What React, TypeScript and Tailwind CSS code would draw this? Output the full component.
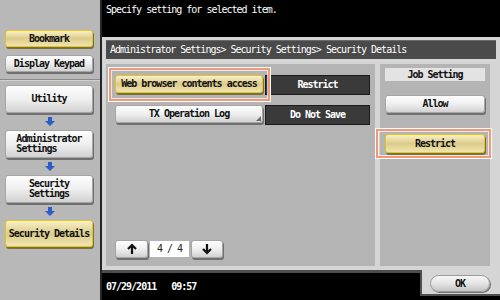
import React from 'react';

const mono = "font-['DejaVu_Sans_Mono',monospace] tracking-[-1px] text-[10px] leading-[10px]";
const grayBtn =
  'bg-linear-to-b from-[#fdfdfd] via-[#efefef] to-[#d2d2d2] border border-[#a5a5a5] shadow-[1px_2px_0_#6f6f6f] rounded-[3px] text-[#111]';
const yellowBtn =
  'bg-linear-to-b from-[#f8f0c6] via-[#dccb8a] to-[#f1e5ad] border border-[#e3c51b] shadow-[1px_2px_0_#7a7040] rounded-[3px] text-[#111]';

const BlueArrow = () => (
  <svg width="10" height="9" viewBox="0 0 10 9">
    <path d="M3 0h4v4h3L5 9 0 4h3z" fill="#2c5cc5" />
  </svg>
);

const Highlight = ({ pos }: { pos: string }) => (
  <div className={`pointer-events-none absolute border border-white ${pos}`}>
    <div className="h-full border-2 border-[#f19877]">
      <div className="h-full border border-white/70" />
    </div>
  </div>
);

const SideBtn = ({
  children,
  yellow,
  h,
}: {
  children: React.ReactNode;
  yellow?: boolean;
  h: string;
}) => (
  <div
    className={`ml-[5px] flex w-[88px] flex-col items-center justify-center font-bold ${h} ${mono} ${
      yellow ? yellowBtn : grayBtn
    }`}
  >
    {children}
  </div>
);

const PageArrow = ({ up }: { up?: boolean }) => (
  <svg width="12" height="12" viewBox="0 0 12 12" className={up ? '' : 'rotate-180'}>
    <path d="M6 11V2M2 6l4-4 4 4" stroke="#111" strokeWidth="2.2" fill="none" />
  </svg>
);

export default function App() {
  return (
    <div className="flex h-[300px] w-[500px] overflow-hidden bg-black">
      {/* sidebar */}
      <div className="flex w-[102px] shrink-0 flex-col border-r-2 border-[#262626] bg-[#b8b8b8] pt-[30px]">
        <SideBtn yellow h="h-[17px]">Bookmark</SideBtn>
        <div className="mt-[8px]">
          <SideBtn h="h-[17px]">Display Keypad</SideBtn>
        </div>
        <div className="mt-[7px] h-[1px] bg-[#8a8a8a]" />
        <div className="h-[1px] bg-[#d0d0d0]" />
        <div className="mt-[4px]">
          <SideBtn h="h-[28px]">Utility</SideBtn>
        </div>
        <div className="flex h-[17px] items-center justify-center">
          <BlueArrow />
        </div>
        <SideBtn h="h-[28px]">
          <span className="whitespace-pre">{'Administrator\nSettings     '}</span>
        </SideBtn>
        <div className="flex h-[17px] items-center justify-center">
          <BlueArrow />
        </div>
        <SideBtn h="h-[28px]">
          <span className="text-center">
            Security
            <br />
            Settings
          </span>
        </SideBtn>
        <div className="flex h-[17px] items-center justify-center">
          <BlueArrow />
        </div>
        <SideBtn yellow h="h-[27px]">Security Details</SideBtn>
      </div>

      {/* main */}
      <div className="flex flex-1 flex-col">
        <div className={`h-[37px] pl-[4px] pt-[5px] text-white ${mono}`}>
          Specify setting for selected item.
        </div>

        <div className="flex h-[233px] flex-col bg-[#d5d5d5] pb-[4px] pl-[4px] pr-[4px] pt-[3px]">
          <div
            className={`flex h-[19px] items-center border-t border-[#6a6a6a] bg-[#4a4a4a] pl-[4px] text-white ${mono}`}
          >
            Administrator Settings&gt; Security Settings&gt; Security Details
          </div>

          <div className="mt-[5px] flex flex-1 gap-[5px]">
            {/* left panel */}
            <div className="flex w-[269px] flex-col bg-[#b4b4b4] pb-[8px] pl-[9px] pt-[11px]">
              <div className="flex">
                <div className="relative">
                  <div
                    className={`flex h-[18px] w-[148px] items-center justify-center font-bold ${mono} ${yellowBtn}`}
                  >
                    Web browser contents access
                  </div>
                  <Highlight pos="-left-[7px] -right-[8px] -top-[8px] -bottom-[7px]" />
                </div>
                <div
                  className={`ml-[2px] flex h-[20px] w-[105px] items-center justify-center border border-[#1c1c1c] bg-[#3a3a3a] font-bold text-white ${mono}`}
                >
                  Restrict
                </div>
              </div>

              <div className="mt-[10px] flex">
                <div
                  className={`relative flex h-[18px] w-[148px] items-center justify-center font-bold ${mono} ${grayBtn}`}
                >
                  TX Operation Log
                  <div className="absolute bottom-[1px] right-[1px] h-0 w-0 border-b-[5px] border-l-[5px] border-b-[#6a6a6a] border-l-transparent" />
                </div>
                <div
                  className={`ml-[2px] flex h-[20px] w-[105px] items-center justify-center border border-[#1c1c1c] bg-[#3a3a3a] font-bold text-white ${mono}`}
                >
                  Do Not Save
                </div>
              </div>

              <div className="mt-auto flex items-center gap-[2px]">
                <div className={`flex h-[18px] w-[33px] items-center justify-center ${grayBtn}`}>
                  <PageArrow up />
                </div>
                <div className={`flex h-[16px] w-[39px] items-center justify-center bg-white text-[#222] ${mono}`}>
                  4 / 4
                </div>
                <div className={`flex h-[18px] w-[32px] items-center justify-center ${grayBtn}`}>
                  <PageArrow />
                </div>
              </div>
            </div>

            {/* right panel */}
            <div className="flex w-[110px] flex-col bg-[#b4b4b4] px-[5px] pt-[4px]">
              <div className={`flex h-[13px] items-center justify-center bg-[#e3e3e3] font-bold text-[#111] ${mono}`}>
                Job Setting
              </div>
              <div
                className={`mt-[14px] flex h-[18px] items-center justify-center font-bold ${mono} ${grayBtn}`}
              >
                Allow
              </div>
              <div className="relative mt-[21px]">
                <div
                  className={`flex h-[19px] items-center justify-center font-bold ${mono} ${yellowBtn}`}
                >
                  Restrict
                </div>
                <Highlight pos="-left-[10px] -right-[7px] -top-[6px] -bottom-[6px]" />
              </div>
            </div>
          </div>
        </div>

        {/* bottom bar */}
        <div className="flex h-[30px]">
          <div className={`flex-1 whitespace-pre border-t-[3px] border-[#4e4e4e] pl-[4px] pt-[9px] font-bold text-white ${mono}`}>
            07/29/2011   09:57
          </div>
          <div className="h-[26px] w-[80px] border-b-2 border-l-2 border-[#4e4e4e] bg-[#d5d5d5] pl-[8px] pt-[5px]">
            <div
              className={`flex h-[17px] w-[60px] items-center justify-center rounded-full font-bold ${mono} bg-linear-to-b from-[#f6f6f6] via-[#e4e4e4] to-[#c4c4c4] border border-[#9a9a9a] shadow-[1px_1px_0_#6f6f6f] text-[#111]`}
            >
              OK
            </div>
          </div>
        </div>
      </div>
    </div>
  );
}
